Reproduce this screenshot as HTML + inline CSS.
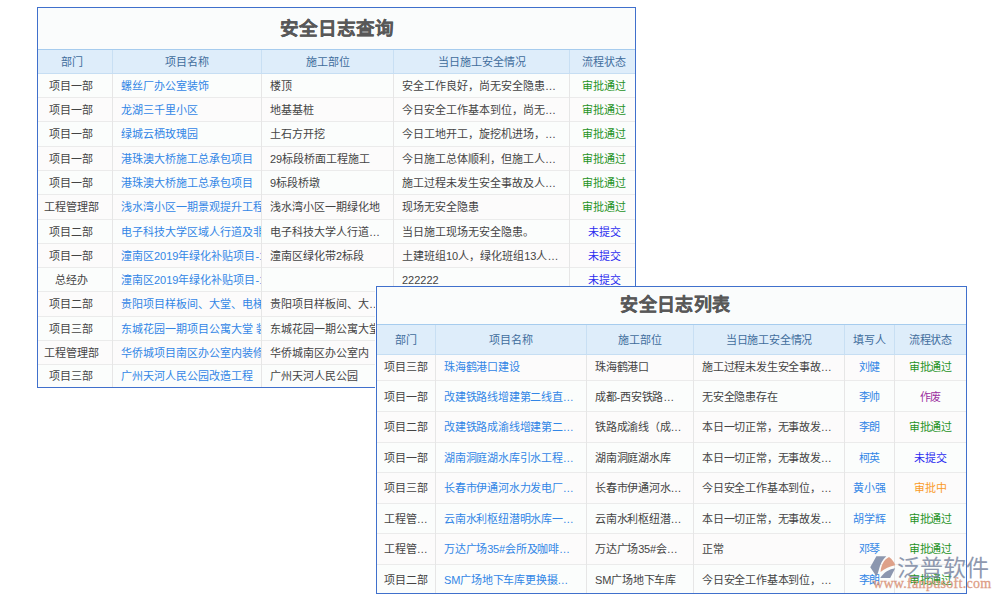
<!DOCTYPE html>
<html lang="zh-CN"><head><meta charset="utf-8"><style>
*{margin:0;padding:0;box-sizing:border-box}
html,body{width:1000px;height:600px;background:#fff;overflow:hidden;font-family:"Liberation Sans",sans-serif;color:#444}
.tb{position:absolute;border:1px solid #4070cc;background:#fafcfc}
.ro{position:absolute;left:0;right:0;background:#fcfbfb}
.re{position:absolute;left:0;right:0;background:#fbfdfc}
.title{position:absolute;left:0;right:0;top:0;font-weight:bold;text-align:center;color:#585858;-webkit-text-stroke:0.25px #585858}
.hd{position:absolute;left:0;right:0;background:#deedfa;border-top:1px solid #a6ccee;border-bottom:1px solid #c6def3}
.c{position:absolute;white-space:nowrap;overflow:hidden;font-size:11px}
.vl{position:absolute;width:1px;background:#e6e6e6}
.vh{position:absolute;width:1px;background:#c8dff3}
.hl{position:absolute;height:1px;background:#ebebeb}
.t2 .c{letter-spacing:-0.2px}
.hdc{color:#406c9c;text-align:center}
.lk{color:#3286e6}
.g{color:#259225}.b{color:#2b2bf0}.o{color:#fa9a28}.p{color:#9b2fa0}
</style></head>
<body>
<div class="tb" style="left:37px;top:7px;width:599px;height:381px">
<div class="title" style="top:10px;height:22px;line-height:22px;font-size:18.6px">安全日志查询</div>
<div class="hd" style="top:41px;height:25px"></div>
<div class="vh" style="left:74px;top:42px;height:23px"></div>
<div class="vh" style="left:223px;top:42px;height:23px"></div>
<div class="vh" style="left:355px;top:42px;height:23px"></div>
<div class="vh" style="left:531px;top:42px;height:23px"></div>
<div class="c hdc" style="left:0px;width:74px;top:42px;height:23px;line-height:24px;padding-right:6px;">部门</div>
<div class="c hdc" style="left:75px;width:148px;top:42px;height:23px;line-height:24px;">项目名称</div>
<div class="c hdc" style="left:224px;width:131px;top:42px;height:23px;line-height:24px;">施工部位</div>
<div class="c hdc" style="left:356px;width:175px;top:42px;height:23px;line-height:24px;">当日施工安全情况</div>
<div class="c hdc" style="left:532px;width:65px;top:42px;height:23px;line-height:24px;padding-left:3px;">流程状态</div>
<div class="re" style="top:66px;height:23.200000000000003px"></div>
<div class="ro" style="top:90.2px;height:23.269999999999996px"></div>
<div class="re" style="top:114.47px;height:23.27000000000001px"></div>
<div class="ro" style="top:138.74px;height:23.269999999999982px"></div>
<div class="re" style="top:163.01px;height:23.27000000000001px"></div>
<div class="ro" style="top:187.28px;height:23.27000000000001px"></div>
<div class="re" style="top:211.55px;height:23.269999999999982px"></div>
<div class="ro" style="top:235.82px;height:23.269999999999982px"></div>
<div class="re" style="top:260.09px;height:23.27000000000004px"></div>
<div class="ro" style="top:284.36px;height:23.269999999999982px"></div>
<div class="re" style="top:308.63px;height:23.269999999999982px"></div>
<div class="ro" style="top:332.9px;height:23.269999999999982px"></div>
<div class="re" style="top:357.16999999999996px;height:21.83000000000004px"></div>
<div class="hl" style="left:0;right:0;top:89.2px"></div>
<div class="hl" style="left:0;right:0;top:113.47px"></div>
<div class="hl" style="left:0;right:0;top:137.74px"></div>
<div class="hl" style="left:0;right:0;top:162.01px"></div>
<div class="hl" style="left:0;right:0;top:186.28px"></div>
<div class="hl" style="left:0;right:0;top:210.55px"></div>
<div class="hl" style="left:0;right:0;top:234.82px"></div>
<div class="hl" style="left:0;right:0;top:259.09px"></div>
<div class="hl" style="left:0;right:0;top:283.36px"></div>
<div class="hl" style="left:0;right:0;top:307.63px"></div>
<div class="hl" style="left:0;right:0;top:331.9px"></div>
<div class="hl" style="left:0;right:0;top:356.16999999999996px"></div>
<div class="vl" style="left:74px;top:66px;height:313px"></div>
<div class="vl" style="left:223px;top:66px;height:313px"></div>
<div class="vl" style="left:355px;top:66px;height:313px"></div>
<div class="vl" style="left:531px;top:66px;height:313px"></div>
<div class="c" style="left:0px;width:74px;top:67px;height:23.200000000000003px;line-height:23.200000000000003px;text-align:center;padding-right:8px;">项目一部</div>
<div class="c lk" style="left:75px;width:148px;top:67px;height:23.200000000000003px;line-height:23.200000000000003px;padding-left:8px;">螺丝厂办公室装饰</div>
<div class="c" style="left:224px;width:131px;top:67px;height:23.200000000000003px;line-height:23.200000000000003px;padding-left:8px;">楼顶</div>
<div class="c" style="left:356px;width:175px;top:67px;height:23.200000000000003px;line-height:23.200000000000003px;padding-left:8px;">安全工作良好，尚无安全隐患…</div>
<div class="c g" style="left:532px;width:65px;top:67px;height:23.200000000000003px;line-height:23.200000000000003px;text-align:center;padding-left:3px;">审批通过</div>
<div class="c" style="left:0px;width:74px;top:91.2px;height:23.269999999999996px;line-height:23.269999999999996px;text-align:center;padding-right:8px;">项目一部</div>
<div class="c lk" style="left:75px;width:148px;top:91.2px;height:23.269999999999996px;line-height:23.269999999999996px;padding-left:8px;">龙湖三千里小区</div>
<div class="c" style="left:224px;width:131px;top:91.2px;height:23.269999999999996px;line-height:23.269999999999996px;padding-left:8px;">地基基桩</div>
<div class="c" style="left:356px;width:175px;top:91.2px;height:23.269999999999996px;line-height:23.269999999999996px;padding-left:8px;">今日安全工作基本到位，尚无…</div>
<div class="c g" style="left:532px;width:65px;top:91.2px;height:23.269999999999996px;line-height:23.269999999999996px;text-align:center;padding-left:3px;">审批通过</div>
<div class="c" style="left:0px;width:74px;top:115.47px;height:23.27000000000001px;line-height:23.27000000000001px;text-align:center;padding-right:8px;">项目一部</div>
<div class="c lk" style="left:75px;width:148px;top:115.47px;height:23.27000000000001px;line-height:23.27000000000001px;padding-left:8px;">绿城云栖玫瑰园</div>
<div class="c" style="left:224px;width:131px;top:115.47px;height:23.27000000000001px;line-height:23.27000000000001px;padding-left:8px;">土石方开挖</div>
<div class="c" style="left:356px;width:175px;top:115.47px;height:23.27000000000001px;line-height:23.27000000000001px;padding-left:8px;">今日工地开工，旋挖机进场，…</div>
<div class="c g" style="left:532px;width:65px;top:115.47px;height:23.27000000000001px;line-height:23.27000000000001px;text-align:center;padding-left:3px;">审批通过</div>
<div class="c" style="left:0px;width:74px;top:139.74px;height:23.269999999999982px;line-height:23.269999999999982px;text-align:center;padding-right:8px;">项目一部</div>
<div class="c lk" style="left:75px;width:148px;top:139.74px;height:23.269999999999982px;line-height:23.269999999999982px;padding-left:8px;">港珠澳大桥施工总承包项目</div>
<div class="c" style="left:224px;width:131px;top:139.74px;height:23.269999999999982px;line-height:23.269999999999982px;padding-left:8px;">29标段桥面工程施工</div>
<div class="c" style="left:356px;width:175px;top:139.74px;height:23.269999999999982px;line-height:23.269999999999982px;padding-left:8px;">今日施工总体顺利，但施工人…</div>
<div class="c g" style="left:532px;width:65px;top:139.74px;height:23.269999999999982px;line-height:23.269999999999982px;text-align:center;padding-left:3px;">审批通过</div>
<div class="c" style="left:0px;width:74px;top:164.01px;height:23.27000000000001px;line-height:23.27000000000001px;text-align:center;padding-right:8px;">项目一部</div>
<div class="c lk" style="left:75px;width:148px;top:164.01px;height:23.27000000000001px;line-height:23.27000000000001px;padding-left:8px;">港珠澳大桥施工总承包项目</div>
<div class="c" style="left:224px;width:131px;top:164.01px;height:23.27000000000001px;line-height:23.27000000000001px;padding-left:8px;">9标段桥墩</div>
<div class="c" style="left:356px;width:175px;top:164.01px;height:23.27000000000001px;line-height:23.27000000000001px;padding-left:8px;">施工过程未发生安全事故及人…</div>
<div class="c g" style="left:532px;width:65px;top:164.01px;height:23.27000000000001px;line-height:23.27000000000001px;text-align:center;padding-left:3px;">审批通过</div>
<div class="c" style="left:0px;width:74px;top:188.28px;height:23.27000000000001px;line-height:23.27000000000001px;text-align:center;padding-right:8px;">工程管理部</div>
<div class="c lk" style="left:75px;width:148px;top:188.28px;height:23.27000000000001px;line-height:23.27000000000001px;padding-left:8px;">浅水湾小区一期景观提升工程</div>
<div class="c" style="left:224px;width:131px;top:188.28px;height:23.27000000000001px;line-height:23.27000000000001px;padding-left:8px;">浅水湾小区一期绿化地</div>
<div class="c" style="left:356px;width:175px;top:188.28px;height:23.27000000000001px;line-height:23.27000000000001px;padding-left:8px;">现场无安全隐患</div>
<div class="c g" style="left:532px;width:65px;top:188.28px;height:23.27000000000001px;line-height:23.27000000000001px;text-align:center;padding-left:3px;">审批通过</div>
<div class="c" style="left:0px;width:74px;top:212.55px;height:23.269999999999982px;line-height:23.269999999999982px;text-align:center;padding-right:8px;">项目二部</div>
<div class="c lk" style="left:75px;width:148px;top:212.55px;height:23.269999999999982px;line-height:23.269999999999982px;padding-left:8px;">电子科技大学区域人行道及非</div>
<div class="c" style="left:224px;width:131px;top:212.55px;height:23.269999999999982px;line-height:23.269999999999982px;padding-left:8px;">电子科技大学人行道…</div>
<div class="c" style="left:356px;width:175px;top:212.55px;height:23.269999999999982px;line-height:23.269999999999982px;padding-left:8px;">当日施工现场无安全隐患。</div>
<div class="c b" style="left:532px;width:65px;top:212.55px;height:23.269999999999982px;line-height:23.269999999999982px;text-align:center;padding-left:3px;">未提交</div>
<div class="c" style="left:0px;width:74px;top:236.82px;height:23.269999999999982px;line-height:23.269999999999982px;text-align:center;padding-right:8px;">项目一部</div>
<div class="c lk" style="left:75px;width:148px;top:236.82px;height:23.269999999999982px;line-height:23.269999999999982px;padding-left:8px;">潼南区2019年绿化补贴项目-1</div>
<div class="c" style="left:224px;width:131px;top:236.82px;height:23.269999999999982px;line-height:23.269999999999982px;padding-left:8px;">潼南区绿化带2标段</div>
<div class="c" style="left:356px;width:175px;top:236.82px;height:23.269999999999982px;line-height:23.269999999999982px;padding-left:8px;">土建班组10人，绿化班组13人…</div>
<div class="c b" style="left:532px;width:65px;top:236.82px;height:23.269999999999982px;line-height:23.269999999999982px;text-align:center;padding-left:3px;">未提交</div>
<div class="c" style="left:0px;width:74px;top:261.09px;height:23.27000000000004px;line-height:23.27000000000004px;text-align:center;padding-right:8px;">总经办</div>
<div class="c lk" style="left:75px;width:148px;top:261.09px;height:23.27000000000004px;line-height:23.27000000000004px;padding-left:8px;">潼南区2019年绿化补贴项目-1</div>
<div class="c" style="left:356px;width:175px;top:261.09px;height:23.27000000000004px;line-height:23.27000000000004px;padding-left:8px;">222222</div>
<div class="c b" style="left:532px;width:65px;top:261.09px;height:23.27000000000004px;line-height:23.27000000000004px;text-align:center;padding-left:3px;">未提交</div>
<div class="c" style="left:0px;width:74px;top:285.36px;height:23.269999999999982px;line-height:23.269999999999982px;text-align:center;padding-right:8px;">项目二部</div>
<div class="c lk" style="left:75px;width:148px;top:285.36px;height:23.269999999999982px;line-height:23.269999999999982px;padding-left:8px;">贵阳项目样板间、大堂、电梯</div>
<div class="c" style="left:224px;width:131px;top:285.36px;height:23.269999999999982px;line-height:23.269999999999982px;padding-left:8px;">贵阳项目样板间、大…</div>
<div class="c" style="left:0px;width:74px;top:309.63px;height:23.269999999999982px;line-height:23.269999999999982px;text-align:center;padding-right:8px;">项目三部</div>
<div class="c lk" style="left:75px;width:148px;top:309.63px;height:23.269999999999982px;line-height:23.269999999999982px;padding-left:8px;">东城花园一期项目公寓大堂 装</div>
<div class="c" style="left:224px;width:131px;top:309.63px;height:23.269999999999982px;line-height:23.269999999999982px;padding-left:8px;">东城花园一期公寓大堂</div>
<div class="c" style="left:0px;width:74px;top:333.9px;height:23.269999999999982px;line-height:23.269999999999982px;text-align:center;padding-right:8px;">工程管理部</div>
<div class="c lk" style="left:75px;width:148px;top:333.9px;height:23.269999999999982px;line-height:23.269999999999982px;padding-left:8px;">华侨城项目南区办公室内装修</div>
<div class="c" style="left:224px;width:131px;top:333.9px;height:23.269999999999982px;line-height:23.269999999999982px;padding-left:8px;">华侨城南区办公室内</div>
<div class="c" style="left:0px;width:74px;top:358.16999999999996px;height:21.83000000000004px;line-height:21.83000000000004px;text-align:center;padding-right:8px;">项目三部</div>
<div class="c lk" style="left:75px;width:148px;top:358.16999999999996px;height:21.83000000000004px;line-height:21.83000000000004px;padding-left:8px;">广州天河人民公园改造工程</div>
<div class="c" style="left:224px;width:131px;top:358.16999999999996px;height:21.83000000000004px;line-height:21.83000000000004px;padding-left:8px;">广州天河人民公园</div>
</div>
<div style="position:absolute;left:375px;top:286px;width:593px;height:309px;background:#fff"></div>
<div class="tb t2" style="left:376px;top:286px;width:591px;height:308px">
<div class="title" style="top:7px;height:22px;line-height:22px;font-size:18px;letter-spacing:0.4px;padding-left:8px">安全日志列表</div>
<div class="hd" style="top:37px;height:31px"></div>
<div class="vh" style="left:58px;top:38px;height:29px"></div>
<div class="vh" style="left:209px;top:38px;height:29px"></div>
<div class="vh" style="left:316px;top:38px;height:29px"></div>
<div class="vh" style="left:467px;top:38px;height:29px"></div>
<div class="vh" style="left:517px;top:38px;height:29px"></div>
<div class="c hdc" style="left:0px;width:58px;top:38px;height:29px;line-height:31px">部门</div>
<div class="c hdc" style="left:59px;width:150px;top:38px;height:29px;line-height:31px">项目名称</div>
<div class="c hdc" style="left:210px;width:106px;top:38px;height:29px;line-height:31px">施工部位</div>
<div class="c hdc" style="left:317px;width:150px;top:38px;height:29px;line-height:31px">当日施工安全情况</div>
<div class="c hdc" style="left:468px;width:49px;top:38px;height:29px;line-height:31px">填写人</div>
<div class="c hdc" style="left:518px;width:71px;top:38px;height:29px;line-height:31px">流程状态</div>
<div class="ro" style="top:68px;height:25px"></div>
<div class="re" style="top:94px;height:30px"></div>
<div class="ro" style="top:125px;height:29.5px"></div>
<div class="re" style="top:155.5px;height:29.69999999999999px"></div>
<div class="ro" style="top:186.2px;height:29.80000000000001px"></div>
<div class="re" style="top:217px;height:29.200000000000045px"></div>
<div class="ro" style="top:247.20000000000005px;height:29.799999999999955px"></div>
<div class="re" style="top:278px;height:28px"></div>
<div class="hl" style="left:0;right:0;top:93px"></div>
<div class="hl" style="left:0;right:0;top:124px"></div>
<div class="hl" style="left:0;right:0;top:154.5px"></div>
<div class="hl" style="left:0;right:0;top:185.2px"></div>
<div class="hl" style="left:0;right:0;top:216px"></div>
<div class="hl" style="left:0;right:0;top:246.20000000000005px"></div>
<div class="hl" style="left:0;right:0;top:277px"></div>
<div class="vl" style="left:58px;top:68px;height:238px"></div>
<div class="vl" style="left:209px;top:68px;height:238px"></div>
<div class="vl" style="left:316px;top:68px;height:238px"></div>
<div class="vl" style="left:467px;top:68px;height:238px"></div>
<div class="vl" style="left:517px;top:68px;height:238px"></div>
<div class="c" style="left:0px;width:58px;top:68px;height:25px;line-height:25px;text-align:center;">项目三部</div>
<div class="c lk" style="left:59px;width:150px;top:68px;height:25px;line-height:25px;padding-left:8px;">珠海鹤港口建设</div>
<div class="c" style="left:210px;width:106px;top:68px;height:25px;line-height:25px;padding-left:8px;">珠海鹤港口</div>
<div class="c" style="left:317px;width:150px;top:68px;height:25px;line-height:25px;padding-left:8px;">施工过程未发生安全事故…</div>
<div class="c lk" style="left:468px;width:49px;top:68px;height:25px;line-height:25px;text-align:center;">刘健</div>
<div class="c g" style="left:518px;width:71px;top:68px;height:25px;line-height:25px;text-align:center;">审批通过</div>
<div class="c" style="left:0px;width:58px;top:95px;height:30px;line-height:30px;text-align:center;">项目一部</div>
<div class="c lk" style="left:59px;width:150px;top:95px;height:30px;line-height:30px;padding-left:8px;">改建铁路线增建第二线直…</div>
<div class="c" style="left:210px;width:106px;top:95px;height:30px;line-height:30px;padding-left:8px;">成都-西安铁路…</div>
<div class="c" style="left:317px;width:150px;top:95px;height:30px;line-height:30px;padding-left:8px;">无安全隐患存在</div>
<div class="c lk" style="left:468px;width:49px;top:95px;height:30px;line-height:30px;text-align:center;">李帅</div>
<div class="c p" style="left:518px;width:71px;top:95px;height:30px;line-height:30px;text-align:center;">作废</div>
<div class="c" style="left:0px;width:58px;top:126px;height:29.5px;line-height:29.5px;text-align:center;">项目二部</div>
<div class="c lk" style="left:59px;width:150px;top:126px;height:29.5px;line-height:29.5px;padding-left:8px;">改建铁路成渝线增建第二…</div>
<div class="c" style="left:210px;width:106px;top:126px;height:29.5px;line-height:29.5px;padding-left:8px;">铁路成渝线（成…</div>
<div class="c" style="left:317px;width:150px;top:126px;height:29.5px;line-height:29.5px;padding-left:8px;">本日一切正常，无事故发…</div>
<div class="c lk" style="left:468px;width:49px;top:126px;height:29.5px;line-height:29.5px;text-align:center;">李朗</div>
<div class="c g" style="left:518px;width:71px;top:126px;height:29.5px;line-height:29.5px;text-align:center;">审批通过</div>
<div class="c" style="left:0px;width:58px;top:156.5px;height:29.69999999999999px;line-height:29.69999999999999px;text-align:center;">项目一部</div>
<div class="c lk" style="left:59px;width:150px;top:156.5px;height:29.69999999999999px;line-height:29.69999999999999px;padding-left:8px;">湖南洞庭湖水库引水工程…</div>
<div class="c" style="left:210px;width:106px;top:156.5px;height:29.69999999999999px;line-height:29.69999999999999px;padding-left:8px;">湖南洞庭湖水库</div>
<div class="c" style="left:317px;width:150px;top:156.5px;height:29.69999999999999px;line-height:29.69999999999999px;padding-left:8px;">本日一切正常，无事故发…</div>
<div class="c lk" style="left:468px;width:49px;top:156.5px;height:29.69999999999999px;line-height:29.69999999999999px;text-align:center;">柯英</div>
<div class="c b" style="left:518px;width:71px;top:156.5px;height:29.69999999999999px;line-height:29.69999999999999px;text-align:center;">未提交</div>
<div class="c" style="left:0px;width:58px;top:187.2px;height:29.80000000000001px;line-height:29.80000000000001px;text-align:center;">项目三部</div>
<div class="c lk" style="left:59px;width:150px;top:187.2px;height:29.80000000000001px;line-height:29.80000000000001px;padding-left:8px;">长春市伊通河水力发电厂…</div>
<div class="c" style="left:210px;width:106px;top:187.2px;height:29.80000000000001px;line-height:29.80000000000001px;padding-left:8px;">长春市伊通河水…</div>
<div class="c" style="left:317px;width:150px;top:187.2px;height:29.80000000000001px;line-height:29.80000000000001px;padding-left:8px;">今日安全工作基本到位，…</div>
<div class="c lk" style="left:468px;width:49px;top:187.2px;height:29.80000000000001px;line-height:29.80000000000001px;text-align:center;">黄小强</div>
<div class="c o" style="left:518px;width:71px;top:187.2px;height:29.80000000000001px;line-height:29.80000000000001px;text-align:center;">审批中</div>
<div class="c" style="left:0px;width:58px;top:218px;height:29.200000000000045px;line-height:29.200000000000045px;text-align:center;">工程管…</div>
<div class="c lk" style="left:59px;width:150px;top:218px;height:29.200000000000045px;line-height:29.200000000000045px;padding-left:8px;">云南水利枢纽潜明水库一…</div>
<div class="c" style="left:210px;width:106px;top:218px;height:29.200000000000045px;line-height:29.200000000000045px;padding-left:8px;">云南水利枢纽潜…</div>
<div class="c" style="left:317px;width:150px;top:218px;height:29.200000000000045px;line-height:29.200000000000045px;padding-left:8px;">本日一切正常，无事故发…</div>
<div class="c lk" style="left:468px;width:49px;top:218px;height:29.200000000000045px;line-height:29.200000000000045px;text-align:center;">胡学辉</div>
<div class="c g" style="left:518px;width:71px;top:218px;height:29.200000000000045px;line-height:29.200000000000045px;text-align:center;">审批通过</div>
<div class="c" style="left:0px;width:58px;top:248.20000000000005px;height:29.799999999999955px;line-height:29.799999999999955px;text-align:center;">工程管…</div>
<div class="c lk" style="left:59px;width:150px;top:248.20000000000005px;height:29.799999999999955px;line-height:29.799999999999955px;padding-left:8px;">万达广场35#会所及咖啡…</div>
<div class="c" style="left:210px;width:106px;top:248.20000000000005px;height:29.799999999999955px;line-height:29.799999999999955px;padding-left:8px;">万达广场35#会…</div>
<div class="c" style="left:317px;width:150px;top:248.20000000000005px;height:29.799999999999955px;line-height:29.799999999999955px;padding-left:8px;">正常</div>
<div class="c lk" style="left:468px;width:49px;top:248.20000000000005px;height:29.799999999999955px;line-height:29.799999999999955px;text-align:center;">邓琴</div>
<div class="c g" style="left:518px;width:71px;top:248.20000000000005px;height:29.799999999999955px;line-height:29.799999999999955px;text-align:center;">审批通过</div>
<div class="c" style="left:0px;width:58px;top:279px;height:28px;line-height:28px;text-align:center;">项目二部</div>
<div class="c lk" style="left:59px;width:150px;top:279px;height:28px;line-height:28px;padding-left:8px;">SM广场地下车库更换摄…</div>
<div class="c" style="left:210px;width:106px;top:279px;height:28px;line-height:28px;padding-left:8px;">SM广场地下车库</div>
<div class="c" style="left:317px;width:150px;top:279px;height:28px;line-height:28px;padding-left:8px;">今日安全工作基本到位，…</div>
<div class="c lk" style="left:468px;width:49px;top:279px;height:28px;line-height:28px;text-align:center;">李朗</div>
<div class="c g" style="left:518px;width:71px;top:279px;height:28px;line-height:28px;text-align:center;">审批通过</div>
</div>

<svg style="position:absolute;left:865px;top:550px;opacity:0.95" width="40" height="35" viewBox="0 0 686 600">
<path d="M195 105 L365 105 C300 160 262 240 240 330 C228 380 214 420 194 452 L90 295 Z" fill="#8792ab"/>
<path d="M268 378 C272 280 320 165 412 122 C465 160 505 215 518 262 C430 275 330 320 268 378 Z" fill="#dd9d83"/>
<path d="M262 482 L432 482 L518 312 C420 325 320 380 262 482 Z" fill="#8792ab"/>
</svg>
<div style="position:absolute;left:897px;top:551px;font-size:23px;line-height:34px;color:#7b88a2;opacity:0.85;white-space:nowrap">泛普软件</div>
<div style="position:absolute;left:873px;top:576px;font-family:'Liberation Serif',serif;font-size:14px;line-height:16px;color:#d88c70;opacity:0.85;letter-spacing:0.3px;-webkit-text-stroke:0.3px #d88c70;white-space:nowrap">www.fanpusoft.com</div>
</body></html>
